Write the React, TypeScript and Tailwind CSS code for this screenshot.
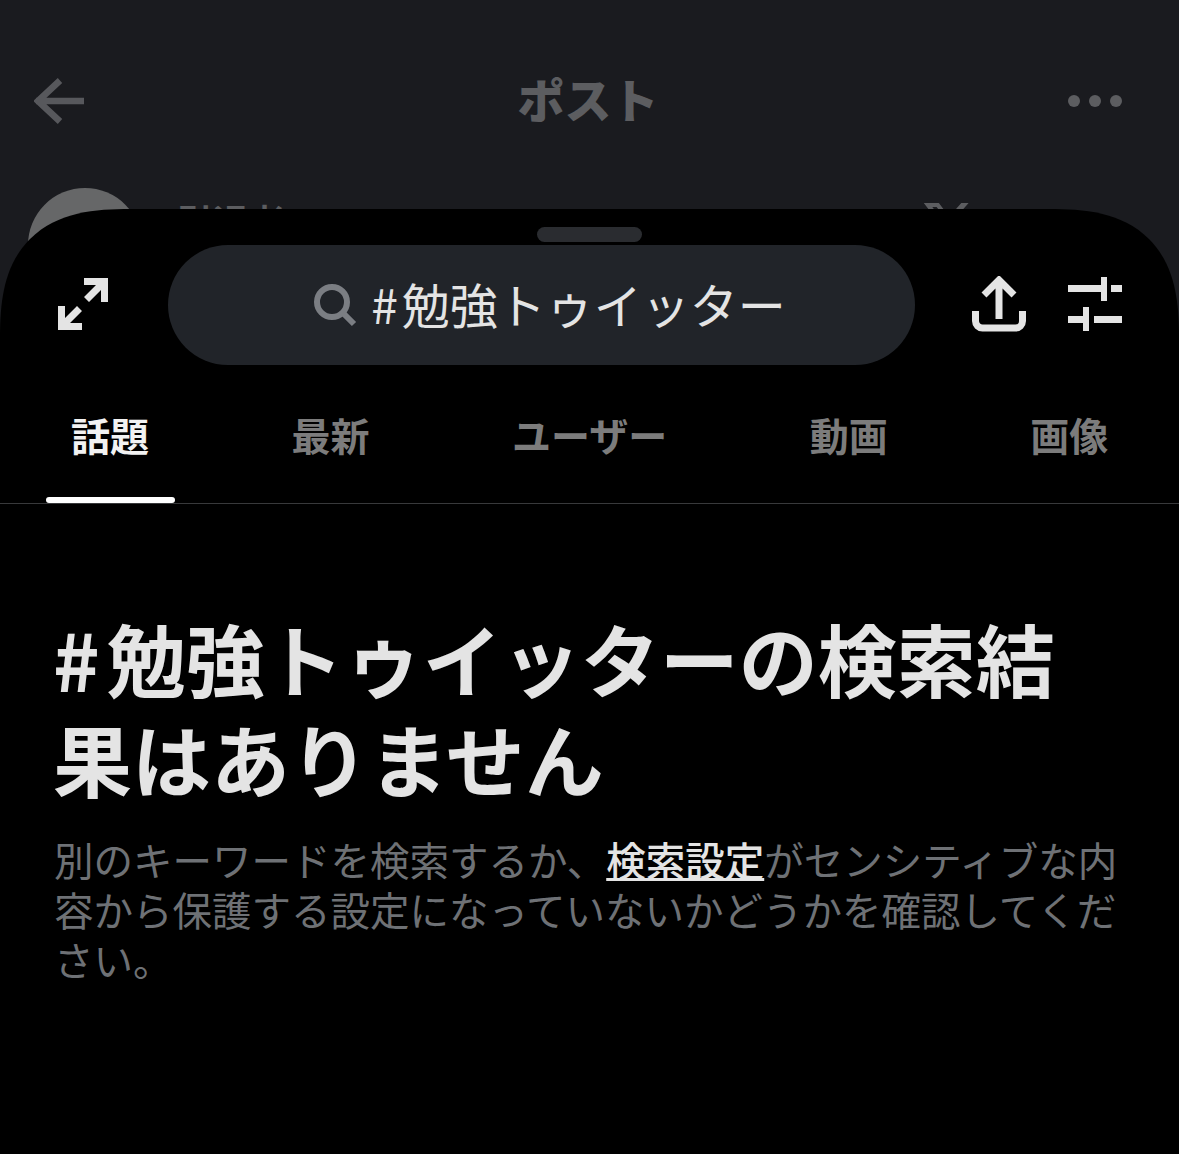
const cjk = "font-['Noto_Sans_CJK_JP','Noto_Sans_CJK_SC',sans-serif]";

const tabs = ["話題", "最新", "ユーザー", "動画", "画像"];

function BackArrow() {
	return (
		<svg width="52" height="46" viewBox="0 0 52 46" fill="none" stroke="#57585c" strokeWidth="6.5">
			<path d="M2 23H50M26 2.500 4 23l22 20.500" />
		</svg>
	);
}

function XLogo() {
	return (
		<svg width="53" height="53" viewBox="0 0 24 24" fill="#5c5d60">
			<path d="M18.244 2.250h3.308l-7.227 8.260 8.502 11.240H16.170l-5.214-6.817L4.990 21.750H1.680l7.730-8.835L1.254 2.250H8.080l4.713 6.231zm-1.161 17.520h1.833L7.084 4.126H5.117z" />
		</svg>
	);
}

function ExpandIcon() {
	return (
		<svg width="54" height="54" viewBox="0 0 54 54" fill="#e4e4e4">
			<path d="M28 1h24v24h-7V13L33 25l-5-5L40 8H28z" />
			<path d="M2 29h7v12l12-12 5 5L14 46h12v7H2z" />
		</svg>
	);
}

function SearchIcon() {
	return (
		<svg width="44" height="44" viewBox="0 0 44 44" fill="none" stroke="#7b7e83" strokeWidth="6">
			<circle cx="19" cy="19" r="15" />
			<path d="m30 30 11 11" />
		</svg>
	);
}

function ShareIcon() {
	return (
		<svg width="54" height="56" viewBox="0 0 54 56" fill="none" stroke="#e4e4e4" strokeWidth="7">
			<path d="M27 3v40M12 19 27 4l15 15" />
			<path d="M3.500 35v10a7 7 0 0 0 7 7h33a7 7 0 0 0 7-7V35" />
		</svg>
	);
}

function SlidersIcon() {
	return (
		<svg width="54" height="54" viewBox="0 0 54 54" fill="#e4e4e4">
			<rect x="0" y="8" width="33" height="7" />
			<rect x="33" y="0" width="6" height="24" />
			<rect x="43" y="8" width="11" height="7" />
			<rect x="0" y="39" width="15" height="7" />
			<rect x="15" y="30" width="6" height="24" />
			<rect x="26" y="39" width="28" height="7" />
		</svg>
	);
}

export default function App() {
	return (
		<div className={`h-[1154px] w-[1179px] overflow-hidden bg-[#1a1b1f] ${cjk}`}>
			<div className="h-[280px]">
				<div className="flex h-[188px] items-start justify-between pl-[34px] pr-[57px] pt-[78px]">
					<BackArrow />
					<span className="ml-[22px] mt-[-14px] text-[47px] font-black leading-[68px] text-[#5c5d60]">ポスト</span>
					<div className="mt-[17px] flex gap-[9px]">
						<span className="size-3 rounded-full bg-[#5c5d60]" />
						<span className="size-3 rounded-full bg-[#5c5d60]" />
						<span className="size-3 rounded-full bg-[#5c5d60]" />
					</div>
				</div>
				<div className="flex items-start pl-[28px] pr-[205px]">
					<div className="size-[114px] rounded-full bg-[#666768]" />
					<span className="ml-[35px] mt-[6px] text-[36px] font-bold leading-[52px] text-[#5c5d60]">引退者</span>
					<div className="ml-auto mt-[10px]">
						<XLogo />
					</div>
				</div>
			</div>

			<div className="relative mt-[-71px] h-[945px] rounded-t-[130px] bg-black [corner-shape:superellipse(1.4)]">
				<div className="flex justify-center pt-[18px]">
					<div className="h-[15px] w-[105px] rounded-full bg-[#2a2c30]" />
				</div>
				<div className="mt-[3px] flex h-[120px] items-center">
					<div className="ml-[56px] mt-[-2px]">
						<ExpandIcon />
					</div>
					<div className="ml-[58px] flex h-[120px] w-[747px] items-center justify-center rounded-full bg-[#212429] pl-[16px]">
						<SearchIcon />
						<span className="ml-[14px] mt-[-5px] text-[48px] leading-none text-[#e4e4e4]">
							<span className="mr-[4px]">#</span>勉強トゥイッター
						</span>
					</div>
					<div className="ml-[57px] mt-[-2px]">
						<ShareIcon />
					</div>
					<div className="ml-[42px] mt-[-2px]">
						<SlidersIcon />
					</div>
				</div>

				<div className="flex h-[139px] gap-[142.5px] border-b border-[#38393b] pl-[71px]">
					{tabs.map((tab, index) => (
						<div className="relative pt-[40px]" key={tab}>
							<span className={`text-[39px] font-bold leading-[58px] ${index === 0 ? "text-[#f2f2f2]" : "text-[#7c7c7c]"}`}>{tab}</span>
							{index === 0 && <div className="absolute bottom-0 left-[-25px] h-[6px] w-[129px] rounded-full bg-white" />}
						</div>
					))}
				</div>

				<div className="pl-[53px] pt-[104px]">
					<h1 className="w-[1030px] text-[79px] font-bold leading-[100px] text-[#e4e4e4]">
						<span className="mr-[7px]">#</span>勉強トゥイッターの検索結果はありません
					</h1>
					<p className="ml-[1px] mt-[26px] w-[1075px] text-[39.5px] leading-[50px] text-[#6e7175]">
						別のキーワードを検索するか、
						<span className="font-medium text-[#e4e4e4] underline">検索設定</span>
						がセンシティブな内容から保護する設定になっていないかどうかを確認してください。
					</p>
				</div>
			</div>
		</div>
	);
}
